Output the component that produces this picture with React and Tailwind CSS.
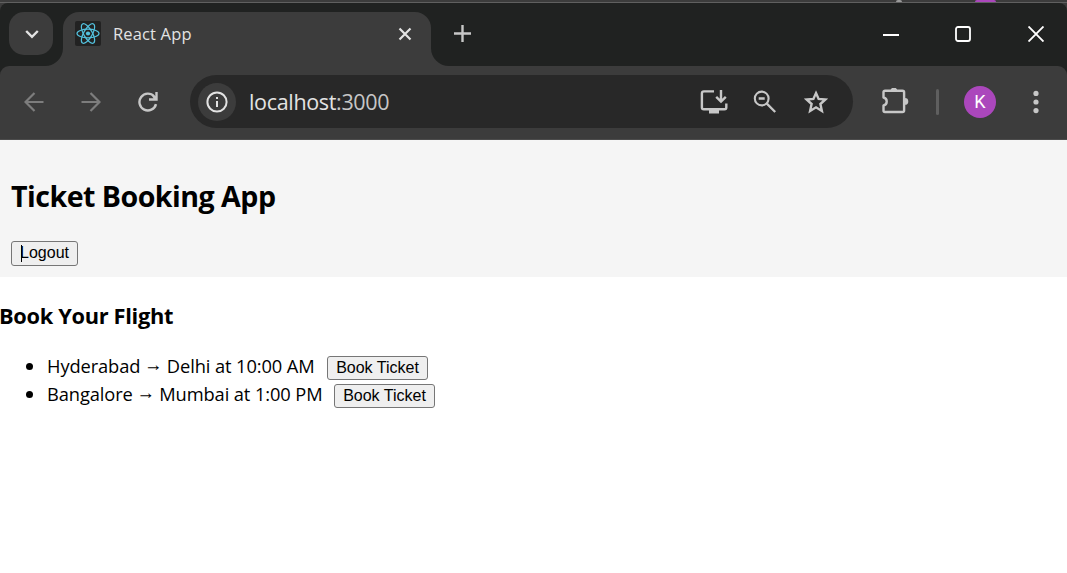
import React from "react";

function Svg({ w, h, className = "", children }) {
  return (
    <svg
      width={w}
      height={h}
      viewBox={`0 0 ${w} ${h}`}
      fill="none"
      stroke="currentColor"
      className={`block shrink-0 ${className}`}
    >
      {children}
    </svg>
  );
}

function ReactLogo() {
  return (
    <Svg w={26} h={25} className="text-[#53c1de]">
      <rect width="26" height="25" rx="2" fill="#222" stroke="none" />
      <circle cx="13" cy="12.5" r="2.1" fill="currentColor" stroke="none" />
      <g strokeWidth="1.2">
        <ellipse cx="13" cy="12.5" rx="11" ry="4.3" />
        <ellipse cx="13" cy="12.5" rx="11" ry="4.3" transform="rotate(60 13 12.5)" />
        <ellipse cx="13" cy="12.5" rx="11" ry="4.3" transform="rotate(120 13 12.5)" />
      </g>
    </Svg>
  );
}

function TabStrip() {
  return (
    <div className="flex h-[63px] items-start bg-[#202221] rounded-t-[8px] pl-[9px] pt-[9px]">
      <div className="flex h-[43px] w-[44px] items-center justify-center rounded-[15px] bg-[#3c3c3c] text-[#e3e3e3]">
        <Svg w={14} h={10} className="ml-px">
          <path d="M1.2 2 7 7.8 12.8 2" strokeWidth="2.4" />
        </Svg>
      </div>
      <div className="relative ml-[10px] flex h-[54px] w-[368px] items-start rounded-t-[16px] bg-[#3c3c3c] pl-[12px] pt-[9px]">
        <Svg w={18} h={18} className="absolute bottom-0 -left-[18px]">
          <path d="M18 0A18 18 0 0 1 0 18H18Z" fill="#3c3c3c" stroke="none" />
        </Svg>
        <Svg w={18} h={18} className="absolute bottom-0 -right-[18px]">
          <path d="M0 0A18 18 0 0 0 18 18H0Z" fill="#3c3c3c" stroke="none" />
        </Svg>
        <ReactLogo />
        <span className="ml-[12px] w-[285px] whitespace-nowrap text-[16.5px] leading-[25px] tracking-[0.15px] text-[#e3e3e3]">
          React App
        </span>
        <Svg w={14} h={14} className="mt-[6px] text-[#e3e3e3]">
          <path d="M1.5 1.5 12.5 12.5M12.5 1.5 1.5 12.5" strokeWidth="2.2" />
        </Svg>
      </div>
      <Svg w={17} h={17} className="ml-[23px] mt-[13px] text-[#c7c7c7]">
        <path d="M8.5 0V17M0 8.5H17" strokeWidth="2.4" />
      </Svg>
      <div className="ml-auto mr-[23px] mt-[14px] flex h-4 items-center text-white">
        <Svg w={16} h={16}>
          <path d="M0 9H16" strokeWidth="2" />
        </Svg>
        <Svg w={16} h={16} className="ml-[56px]">
          <rect x="1" y="1" width="14" height="14" rx="2" strokeWidth="1.8" />
        </Svg>
        <Svg w={16} h={16} className="ml-[57px]">
          <path d="M.5 .5 15.5 15.5M15.5 .5 .5 15.5" strokeWidth="1.9" />
        </Svg>
      </div>
    </div>
  );
}

function Toolbar() {
  return (
    <div className="bg-[#202221]">
      <div className="flex h-[74px] items-center rounded-t-[9px] border-b border-[#4c4c4c] bg-[#3c3c3c] pb-[2px] pl-[24px] text-[#c7c7c7]">
        <Svg w={20} h={20} className="text-[#7d7d7d]">
          <path d="M19.5 10H2M10.5 1 1.5 10 10.5 19" strokeWidth="2.2" />
        </Svg>
        <Svg w={20} h={20} className="ml-[37px] text-[#7d7d7d]">
          <path d="M.5 10H18M9.5 1 18.5 10 9.5 19" strokeWidth="2.2" />
        </Svg>
        <Svg w={20} h={20} className="ml-[37px]">
          <path d="M16.2 4.5A8.4 8.4 0 1 0 18 12.1M18.5 0V7.5H11M18 7.5 14.8 3.2" strokeWidth="2.4" />
        </Svg>
        <div className="ml-[32px] flex h-[53px] w-[663px] items-center rounded-full bg-[#282828] pl-[8px]">
          <div className="flex size-[38px] items-center justify-center rounded-full bg-[#3c3c3c] text-[#e3e3e3]">
            <Svg w={22} h={22}>
              <circle cx="11" cy="11" r="9.6" strokeWidth="2" />
              <path d="M11 10V16M11 6V8" strokeWidth="2" />
            </Svg>
          </div>
          <span className="ml-[13px] w-[451px] whitespace-nowrap text-[21.5px] leading-7 tracking-[-0.33px] text-[#e3e3e3]">
            localhost<span className="text-[#c7c7c7]">:3000</span>
          </span>
          <Svg w={28} h={24}>
            <path
              d="M14 1.4H3.9Q1.9 1.4 1.9 3.4V17.5Q1.9 19.2 3.9 19.2H24.5Q26.3 19.2 26.3 17.5V13.5"
              strokeWidth="2.4"
            />
            <path d="M9 19H19V23.5H9Z" fill="currentColor" stroke="none" />
            <path d="M21 0V11M16.2 6.8 21 11.5 25.8 6.8" strokeWidth="2.4" />
          </Svg>
          <Svg w={24} h={24} className="ml-[25px]">
            <circle cx="8.7" cy="8.5" r="6.9" strokeWidth="2.1" />
            <path d="M13.6 13.4 22.2 22M5.7 8.5H11.7" strokeWidth="2.3" />
          </Svg>
          <Svg w={24} h={24} className="ml-[27px]">
            <path
              d="M12 3.1 14.6 8.9 21.4 9.5 16.4 14 17.9 21 12 17.3 6.1 21 7.6 14 2.6 9.5 9.4 8.9Z"
              strokeWidth="2.4"
            />
          </Svg>
        </div>
        <Svg w={28} h={28} className="ml-[28px]">
          <g transform="translate(.3 -1)">
            <path
              d="M2.2 5.2Q2.2 3.8 3.7 3.8H21.2Q22.8 3.8 22.8 5.3V23.5Q22.8 25 21.2 25H3.7Q2.2 25 2.2 23.5V18.5C6.5 17.5 6.5 11.5 2.2 10.5Z"
              strokeWidth="2.4"
              strokeLinejoin="round"
            />
            <path
              d="M9.2 4a3.4 3.4 0 0 1 6.8 0ZM23.6 11a3.4 3.4 0 0 1 0 6.8Z"
              fill="currentColor"
              stroke="none"
            />
          </g>
        </Svg>
        <div className="ml-[27px] h-[26px] w-[3px] rounded-full bg-[#5f5f5f]" />
        <div className="ml-[25px] flex size-8 items-center justify-center rounded-full bg-[#ab47bc] font-[Roboto,sans-serif] text-[18px] leading-8 text-white">
          K
        </div>
        <Svg w={6} h={24} className="ml-[37px]">
          <g fill="currentColor" stroke="none">
            <circle cx="3" cy="3.4" r="2.6" />
            <circle cx="3" cy="12" r="2.6" />
            <circle cx="3" cy="20.6" r="2.6" />
          </g>
        </Svg>
      </div>
    </div>
  );
}

function Button({ className = "", children }) {
  return (
    <button
      className={`block rounded-[3px] border border-[#767676] bg-[#efefef] text-center font-['Liberation_Sans',sans-serif] text-[16px] whitespace-nowrap ${className}`}
    >
      {children}
    </button>
  );
}

function Flight({ from, to, width }) {
  return (
    <li className="flex h-7 items-center">
      <span className="mb-[4px] mr-[14px] size-[7px] rounded-full bg-black" />
      <span className={`mb-[4px] whitespace-nowrap text-[18.3px] leading-6 ${width}`}>
        {from} <span className="relative -top-[2px] -left-px -mr-px">→</span> {to}
      </span>
      <Button className="h-6 w-[101px] leading-[22px]">Book Ticket</Button>
    </li>
  );
}

export default function App() {
  return (
    <div className="h-[573px] w-[1067px] overflow-hidden bg-white font-['Open_Sans',sans-serif] text-black">
      <div className="bg-[#3c3c3c]">
        <div className="flex h-[2px] items-end overflow-hidden">
          <span className="ml-[896px] h-[2px] w-[6px] rounded-t-full bg-[#9b9b9b]" />
          <span className="ml-[73px] h-[2px] w-[21px] rounded-t-full bg-[#ab47bc]" />
        </div>
        <div className="h-px bg-[#606060]" />
        <TabStrip />
        <Toolbar />
      </div>
      <header className="h-[137px] bg-[#f5f5f5] pl-[11px] pt-[36px]">
        <h1 className="whitespace-nowrap text-[28.6px] font-bold leading-10 tracking-[-0.52px]">Ticket Booking App</h1>
        <div className="mt-[25px] w-[67px]">
          <Button className="relative h-[25px] w-[67px] pb-[2px] leading-[21px]">
            Logout
            <span className="absolute left-[9px] top-[3px] h-[17px] w-px bg-black" />
          </Button>
        </div>
      </header>
      <main>
        <h2 className="mt-[23px] whitespace-nowrap text-[21.8px] font-bold leading-8 tracking-[-0.32px] -ml-px">Book Your Flight</h2>
        <ul className="mt-[22px] pl-[26px]">
          <Flight width="w-[280px] tracking-[-0.1px]" from="Hyderabad" to="Delhi at 10:00 AM" />
          <Flight width="w-[287px] tracking-[-0.1px]" from="Bangalore" to="Mumbai at 1:00 PM" />
        </ul>
      </main>
    </div>
  );
}
